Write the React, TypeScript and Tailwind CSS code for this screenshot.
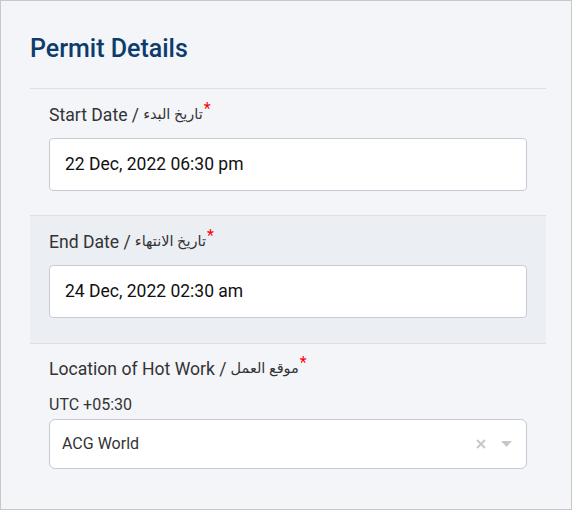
import React from 'react';

const Label: React.FC<{ en: string; ar: string }> = ({ en, ar }) => (
  <div className="flex items-start text-[17.6px] leading-6 text-[#333]">
    <span>{en} / </span>
    <span className="ml-1 text-[14.5px]" dir="rtl">{ar}</span>
    <span className="text-[#f00] text-[16px] leading-none -mt-0.5 ml-px">*</span>
  </div>
);

const DateField: React.FC<{ value: string }> = ({ value }) => (
  <div className="mt-[11px] h-[53px] rounded bg-white border border-[#c6cbd4] flex items-center px-[15px] text-[17.5px] text-[#111]">
    {value}
  </div>
);

export default function App() {
  return (
    <div
      className="w-[572px] h-[510px] bg-[#f3f5f9] border border-[#c8c8c8] pl-[29px] pr-[25px] pt-[33px]"
      style={{ fontFamily: 'Roboto, "DejaVu Sans", sans-serif' }}
    >
      <h2 className="text-[25px] leading-[30px] font-medium text-[#0c3b6c] pb-[24px] border-b border-[#dbe0e8]">
        Permit Details
      </h2>

      <section className="px-[19px] pt-[14px] pb-[24px]">
        <Label en="Start Date" ar="تاريخ البدء" />
        <DateField value="22 Dec, 2022 06:30 pm" />
      </section>

      <section className="px-[19px] pt-[14px] pb-[25px] bg-[#ebeef3] border-y border-[#dbe0e8]">
        <Label en="End Date" ar="تاريخ الانتهاء" />
        <DateField value="24 Dec, 2022 02:30 am" />
      </section>

      <section className="px-[19px] pt-[13px]">
        <Label en="Location of Hot Work" ar="موقع العمل" />
        <div className="mt-[14px] text-[16px] leading-5 text-[#333]">UTC +05:30</div>
        <div className="mt-[4px] h-[50px] rounded-md bg-white border border-[#c6cbd4] flex items-center pl-[12px] pr-[14px] text-[16px] text-[#333]">
          <span className="flex-1">ACG World</span>
          <svg width="10" height="10" viewBox="0 0 10 10" className="mr-[15px]">
            <path d="M1 1 L9 9 M9 1 L1 9" stroke="#c8c8c8" strokeWidth="2" />
          </svg>
          <svg width="11" height="6" viewBox="0 0 11 6">
            <path d="M0 0 H11 L5.5 6 Z" fill="#c8c8c8" />
          </svg>
        </div>
      </section>
    </div>
  );
}
